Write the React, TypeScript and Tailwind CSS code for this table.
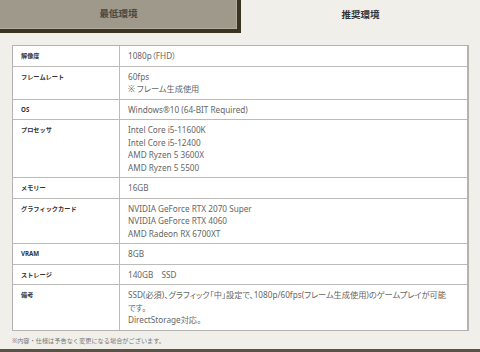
import React from "react";

const specs: { label: string; lines: string[] }[] = [
  { label: "解像度", lines: ["1080p（FHD）"] },
  { label: "フレームレート", lines: ["60fps", "※ フレーム生成使用"] },
  { label: "OS", lines: ["Windows®10 (64-BIT Required)"] },
  {
    label: "プロセッサ",
    lines: ["Intel Core i5-11600K", "Intel Core i5-12400", "AMD Ryzen 5 3600X", "AMD Ryzen 5 5500"],
  },
  { label: "メモリー", lines: ["16GB"] },
  {
    label: "グラフィックカード",
    lines: ["NVIDIA GeForce RTX 2070 Super", "NVIDIA GeForce RTX 4060", "AMD Radeon RX 6700XT"],
  },
  { label: "VRAM", lines: ["8GB"] },
  { label: "ストレージ", lines: ["140GB\u3000SSD"] },
  {
    label: "備考",
    lines: [
      "SSD(必須)、グラフィック「中」設定で、1080p/60fps(フレーム生成使用)のゲームプレイが可能",
      "です。",
      "DirectStorage対応。",
    ],
  },
];

export default function App() {
  return (
    <div
      className="w-[480px] h-[352px] bg-[#f1efea] flex flex-col overflow-hidden"
      style={{ fontFamily: '"Noto Sans", "Noto Sans CJK JP", sans-serif' }}
    >
      {/* tabs */}
      <div className="flex h-[33px] shrink-0">
        <div className="w-[241px] bg-[#9f998b] border-r-4 border-b-4 border-[#3b3222] shadow-[inset_-1px_-1px_0_#b2ac9f] flex items-center justify-center text-[9.5px] font-bold text-[#4d483e]">
          最低環境
        </div>
        <div className="flex-1 flex items-center justify-center pb-[3px] text-[9.5px] font-bold text-[#333]">
          推奨環境
        </div>
      </div>

      <div className="px-[12px] pt-[12px]">
        <div className="w-[457px] bg-white border border-r-2 border-[#b5b3b0]">
          {specs.map((row, i) => (
            <div
              key={row.label}
              className={`grid grid-cols-[107px_1fr] ${i < specs.length - 1 ? "border-b border-[#bdbbb8]" : ""}`}
            >
              <div className="border-r border-[#bdbbb8] pl-[8px] pt-[4px] pb-[3px] text-[6.2px] leading-[12.5px] font-bold text-[#333]">
                {row.label}
              </div>
              <div className="pl-[8px] pr-[4px] pt-[4px] pb-[3px] text-[8.2px] leading-[12.5px] text-[#666] whitespace-nowrap [font-feature-settings:'palt']">
                {row.lines.map((l) => (
                  <p key={l}>{l}</p>
                ))}
              </div>
            </div>
          ))}
        </div>
        <p className="mt-[6px] text-[6.2px] leading-[8px] text-[#777]">
          ※内容・仕様は予告なく変更になる場合がございます。
        </p>
      </div>

      <div className="flex-1" />
      <div className="h-[3px] bg-[#5a5246] shrink-0" />
    </div>
  );
}
